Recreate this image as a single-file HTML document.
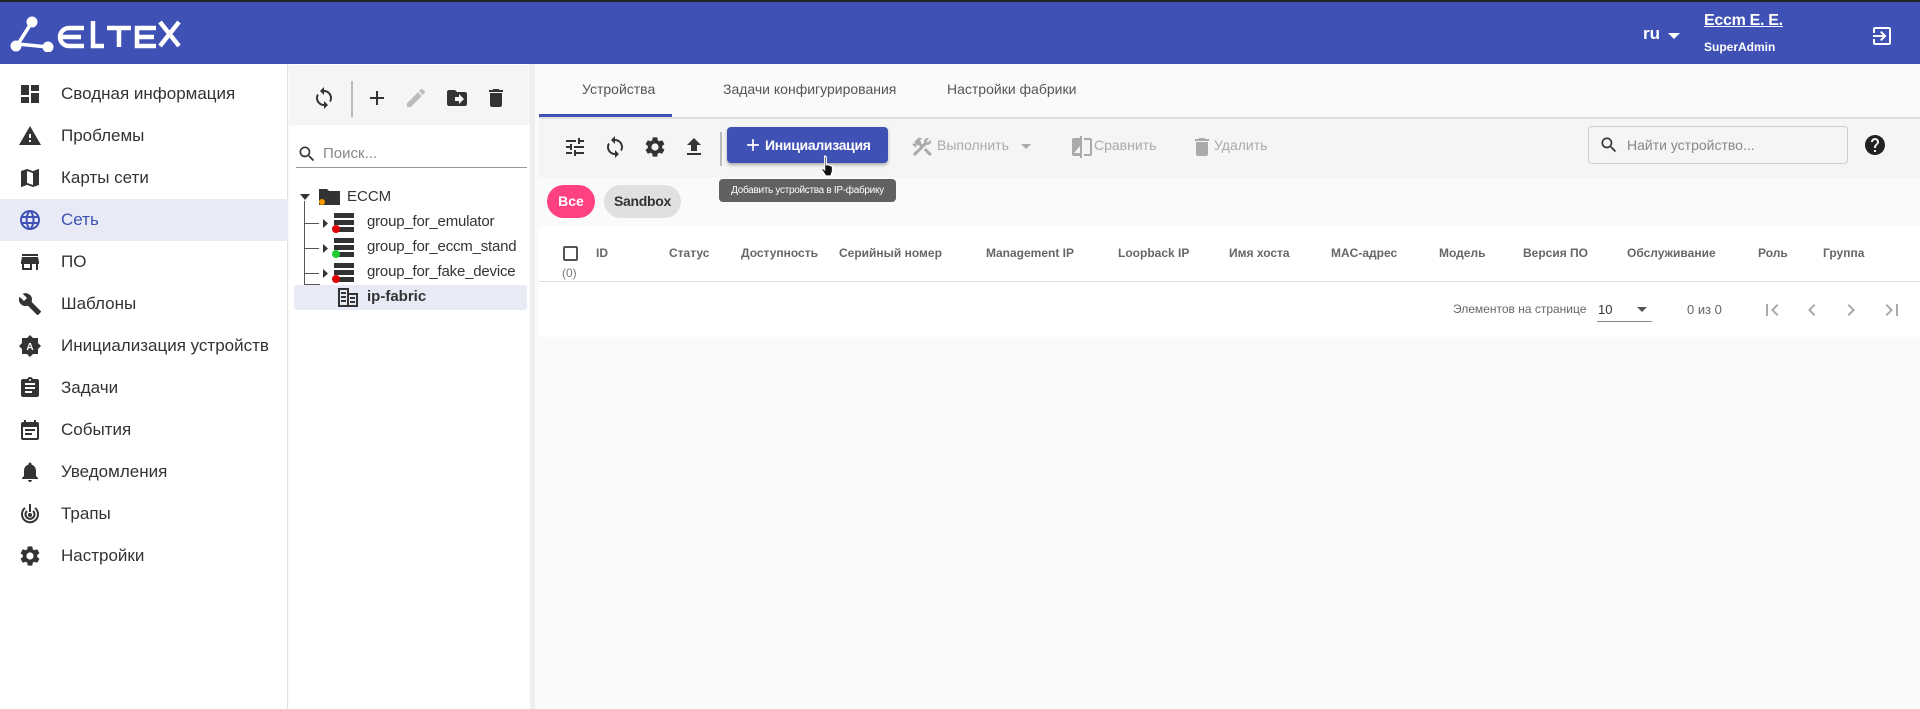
<!DOCTYPE html>
<html><head><meta charset="utf-8"><style>
*{box-sizing:border-box;margin:0;padding:0}
body{width:1920px;height:709px;overflow:hidden;background:#fafafa;font-family:"Liberation Sans",sans-serif;position:relative;color:#333}
.a{position:absolute;white-space:nowrap}
svg{display:block}
.hdr{left:0;top:0;width:1920px;height:64px;background:#3f51b5;border-top:2px solid #222}
.side{left:0;top:64px;width:288px;height:645px;background:#fff;border-right:1px solid #e0e0e0}
.si{position:absolute;left:0;width:288px;height:42px;display:flex;align-items:center}
.si svg{position:absolute;left:18px;top:9px}
.si span{position:absolute;left:61px;font-size:17px;color:#333}
.tree{left:289px;top:64px;width:246px;height:645px;background:#fff;border-right:5px solid #eee}
.th{position:absolute;font-size:12px;font-weight:bold;color:#666;top:246px;white-space:nowrap}
.gray{fill:#aaa}
</style></head><body>
<div class="a hdr">
 <svg class="a" style="left:10px;top:14px" width="172" height="36" viewBox="0 0 172 36">
  <g fill="#fff" stroke="#fff"><circle cx="22" cy="6" r="5"/><circle cx="6" cy="30" r="5"/><circle cx="38" cy="31" r="5"/>
  <path d="M22 6L8 28L38 31" stroke-width="3.5" fill="none"/></g>
  <g fill="none" stroke="#fff" stroke-width="4.5">
   <path d="M74 12H59a9 9 0 0 0 0 18h15M51 21h20"/>
   <path d="M83 5v25h11"/><path d="M97 12h24M109 12v19"/>
   <path d="M146 12h-19v18h19M127 21h17"/><path d="M150 6l19 24M169 6l-19 24"/>
  </g>
 </svg>
 <div class="a" style="left:1643px;top:22px;color:#fff;font-size:17px;font-weight:bold">ru</div>
 <svg class="a" style="left:1668px;top:31px" width="12" height="6"><path d="M0 0h12L6 6z" fill="#fff"/></svg>
 <div class="a" style="left:1704px;top:10px;color:#fff;font-size:16px;font-weight:bold;text-decoration:underline;letter-spacing:-0.3px">Eccm E. E.</div>
 <div class="a" style="left:1704px;top:38px;color:#fff;font-size:12px;font-weight:bold">SuperAdmin</div>
 <svg class="a" style="left:1870px;top:22px" width="24" height="24" viewBox="0 0 24 24"><path fill="#fff" d="M10.09 15.59L11.5 17l5-5-5-5-1.41 1.41L12.67 11H3v2h9.67l-2.58 2.59zM19 3H5c-1.11 0-2 .9-2 2v4h2V5h14v14H5v-4H3v4c0 1.1.89 2 2 2h14c1.1 0 2-.9 2-2V5c0-1.1-.9-2-2-2z"/></svg>
</div>

<div class="a side">
 <div class="si" style="top:9px"><svg width="24" height="24" viewBox="0 0 24 24"><path fill="#333" d="M3 13h8V3H3v10zm0 8h8v-6H3v6zm10 0h8V11h-8v10zm0-18v6h8V3h-8z"/></svg><span>Сводная информация</span></div>
 <div class="si" style="top:51px"><svg width="24" height="24" viewBox="0 0 24 24"><path fill="#333" d="M1 21h22L12 2 1 21zm12-3h-2v-2h2v2zm0-4h-2v-4h2v4z"/></svg><span>Проблемы</span></div>
 <div class="si" style="top:93px"><svg width="24" height="24" viewBox="0 0 24 24"><path fill="#333" d="M20.5 3l-.16.03L15 5.1 9 3 3.36 4.9c-.21.07-.36.25-.36.48V20.5c0 .28.22.5.5.5l.16-.03L9 18.9l6 2.1 5.64-1.9c.21-.07.36-.25.36-.48V3.5c0-.28-.22-.5-.5-.5zM15 19l-6-2.11V5l6 2.11V19z"/></svg><span>Карты сети</span></div>
 <div class="si" style="top:135px;background:#e8eaf6"><svg width="24" height="24" viewBox="0 0 24 24"><path fill="#3f51b5" d="M12 2a10 10 0 1 0 0 20 10 10 0 0 0 0-20zm6.9 6h-2.9a15 15 0 0 0-1.4-3.6A8 8 0 0 1 18.9 8zM12 4c.8 1.2 1.5 2.5 1.9 4h-3.8c.4-1.4 1.1-2.8 1.9-4zM4.3 14a8 8 0 0 1 0-4h3.4a16 16 0 0 0 0 4H4.3zm.8 2h3a15 15 0 0 0 1.4 3.6A8 8 0 0 1 5.1 16zM8 8H5.1a8 8 0 0 1 4.3-3.6C8.8 5.5 8.4 6.7 8 8zm4 12c-.8-1.2-1.5-2.5-1.900-4h3.8c-.4 1.4-1.1 2.8-1.9 4zm2.3-6H9.7a14 14 0 0 1 0-4h4.6a14 14 0 0 1 0 4zm.3 5.6c.6-1.1 1.1-2.3 1.4-3.6h2.9a8 8 0 0 1-4.3 3.6zm1.8-5.6a16 16 0 0 0 0-4h3.4a8 8 0 0 1 0 4h-3.4z"/></svg><span style="color:#3f51b5">Сеть</span></div>
 <div class="si" style="top:177px"><svg width="24" height="24" viewBox="0 0 24 24"><path fill="#333" d="M20 4H4v2h16V4zm1 10v-2l-1-5H4l-1 5v2h1v6h10v-6h4v6h2v-6h1zm-9 4H6v-4h6v4z"/></svg><span>ПО</span></div>
 <div class="si" style="top:219px"><svg width="24" height="24" viewBox="0 0 24 24"><path fill="#333" d="M22.7 19l-9.1-9.1c.9-2.3.4-5-1.5-6.9-2-2-5-2.4-7.4-1.3L9 6 6 9 1.6 4.7C.4 7.1.9 10.1 2.9 12.1c1.9 1.9 4.6 2.4 6.9 1.5l9.1 9.1c.4.4 1 .4 1.4 0l2.3-2.3c.5-.4.5-1.1.1-1.4z"/></svg><span>Шаблоны</span></div>
 <div class="si" style="top:261px"><svg width="24" height="24" viewBox="0 0 24 24"><path fill="#333" d="M12 1l3 3h5v5l3 3-3 3v5h-5l-3 3-3-3H4v-5l-3-3 3-3V4h5z"/><text x="12" y="16" font-size="10" font-weight="bold" fill="#fff" text-anchor="middle" font-family="Liberation Sans">A</text></svg><span>Инициализация устройств</span></div>
 <div class="si" style="top:303px"><svg width="24" height="24" viewBox="0 0 24 24"><path fill="#333" d="M19 3h-4.2C14.4 1.8 13.3 1 12 1s-2.4.8-2.8 2H5c-1.1 0-2 .9-2 2v14c0 1.1.9 2 2 2h14c1.1 0 2-.9 2-2V5c0-1.1-.9-2-2-2zm-7 0c.55 0 1 .45 1 1s-.45 1-1 1-1-.45-1-1 .45-1 1-1zm2 14H7v-2h7v2zm3-4H7v-2h10v2zm0-4H7V7h10v2z"/></svg><span>Задачи</span></div>
 <div class="si" style="top:345px"><svg width="24" height="24" viewBox="0 0 24 24"><path fill="#333" d="M19 4h-1V2h-2v2H8V2H6v2H5a2 2 0 0 0-2 2v14a2 2 0 0 0 2 2h14a2 2 0 0 0 2-2V6a2 2 0 0 0-2-2zm0 16H5V9h14v11zM7 11h10v2H7zm0 4h7v2H7z"/></svg><span>События</span></div>
 <div class="si" style="top:387px"><svg width="24" height="24" viewBox="0 0 24 24"><path fill="#333" d="M12 22c1.1 0 2-.9 2-2h-4c0 1.1.9 2 2 2zm6-6v-5c0-3.070-1.640-5.64-4.5-6.32V4c0-.83-.67-1.5-1.5-1.5s-1.5.67-1.5 1.5v.68C7.63 5.36 6 7.92 6 11v5l-2 2v1h16v-1l-2-2z"/></svg><span>Уведомления</span></div>
 <div class="si" style="top:429px"><svg width="24" height="24" viewBox="0 0 24 24"><g fill="none" stroke="#333" stroke-width="2"><path d="M7 6a8 8 0 1 0 10 0"/><path d="M9 9a4.5 4.5 0 1 0 6 0"/></g><circle cx="12" cy="13" r="2" fill="#333"/><rect x="11" y="2" width="2" height="8" fill="#333"/></svg><span>Трапы</span></div>
 <div class="si" style="top:471px"><svg width="24" height="24" viewBox="0 0 24 24"><path fill="#333" d="M19.14 12.94c.04-.3.06-.61.06-.94 0-.32-.02-.64-.07-.94l2.03-1.58a.49.49 0 0 0 .12-.61l-1.92-3.32a.49.49 0 0 0-.59-.22l-2.39.96c-.5-.38-1.03-.7-1.62-.94l-.36-2.54a.48.48 0 0 0-.48-.41h-3.84c-.24 0-.43.17-.47.41l-.36 2.54c-.59.24-1.13.57-1.62.94l-2.39-.96a.49.49 0 0 0-.59.22L2.74 8.87c-.12.21-.08.47.12.61l2.03 1.58c-.05.3-.09.63-.09.94s.02.64.07.94l-2.03 1.58a.49.49 0 0 0-.12.61l1.92 3.32c.12.22.37.29.59.22l2.39-.96c.5.38 1.03.7 1.62.94l.36 2.54c.05.24.24.41.48.41h3.84c.24 0 .44-.17.47-.41l.36-2.54c.59-.24 1.13-.56 1.62-.94l2.39.96c.22.08.47 0 .59-.22l1.92-3.32c.12-.22.07-.47-.12-.61l-2.01-1.58zM12 15.6A3.6 3.6 0 1 1 12 8.4a3.6 3.6 0 0 1 0 7.2z"/></svg><span>Настройки</span></div>
</div>

<div class="a tree">
 <div class="a" style="left:0;top:1px;width:241px;height:60px;background:#f5f5f5"></div>
 <svg class="a" style="left:23px;top:22px" width="24" height="24" viewBox="0 0 24 24"><path fill="#333" d="M12 4V1L8 5l4 4V6c3.31 0 6 2.69 6 6 0 1.01-.25 1.97-.7 2.8l1.46 1.46A7.930 7.930 0 0 0 20 12c0-4.42-3.58-8-8-8zm0 14c-3.31 0-6-2.69-6-6 0-1.01.25-1.97.7-2.8L5.24 7.74A7.93 7.93 0 0 0 4 12c0 4.42 3.58 8 8 8v3l4-4-4-4v3z"/></svg>
 <div class="a" style="left:62px;top:17px;width:2px;height:36px;background:#bbb"></div>
 <svg class="a" style="left:76px;top:22px" width="24" height="24" viewBox="0 0 24 24"><path fill="#333" d="M19 13h-6v6h-2v-6H5v-2h6V5h2v6h6v2z"/></svg>
 <svg class="a" style="left:115px;top:22px" width="24" height="24" viewBox="0 0 24 24"><path fill="#bbb" d="M3 17.25V21h3.75L17.81 9.94l-3.75-3.75L3 17.25zM20.71 7.04a1 1 0 0 0 0-1.41l-2.34-2.34a1 1 0 0 0-1.41 0l-1.83 1.83 3.75 3.75 1.83-1.83z"/></svg>
 <svg class="a" style="left:156px;top:22px" width="24" height="24" viewBox="0 0 24 24"><path fill="#333" d="M20 6h-8l-2-2H4c-1.1 0-2 .9-2 2v12c0 1.1.9 2 2 2h16c1.1 0 2-.9 2-2V8c0-1.1-.9-2-2-2zm-6 12v-3h-4v-4h4V8l5 5-5 5z"/></svg>
 <svg class="a" style="left:195px;top:22px" width="24" height="24" viewBox="0 0 24 24"><path fill="#333" d="M6 19c0 1.1.9 2 2 2h8c1.1 0 2-.9 2-2V7H6v12zM19 4h-3.5l-1-1h-5l-1 1H5v2h14V4z"/></svg>
 <svg class="a" style="left:8px;top:80px" width="20" height="20" viewBox="0 0 24 24"><path fill="#333" d="M15.5 14h-.79l-.28-.27A6.47 6.47 0 0 0 16 9.5 6.5 6.5 0 1 0 9.5 16c1.61 0 3.09-.59 4.23-1.57l.27.28v.79l5 4.99L20.49 19l-4.99-5zm-6 0C7.01 14 5 11.99 5 9.5S7.01 5 9.5 5 14 7.01 14 9.5 11.99 14 9.5 14z"/></svg>
 <div class="a" style="left:34px;top:81px;font-size:15px;color:#888">Поиск...</div>
 <div class="a" style="left:7px;top:103px;width:231px;height:1px;background:#999"></div>
 <svg class="a" style="left:11px;top:130px" width="10" height="6"><path d="M0 0h10L5 6z" fill="#333"/></svg>
 <div class="a" style="left:15px;top:137px;width:1px;height:83px;background:#555"></div>
 <div class="a" style="left:15px;top:220px;width:16px;height:1px;background:#555"></div>
 <svg class="a" style="left:30px;top:123px" width="22" height="18" viewBox="0 0 22 18"><path fill="#333" d="M0 2h8l2 2h11v14H0z"/><circle cx="3" cy="15" r="3" fill="#ff9800"/></svg>
 <div class="a" style="left:58px;top:124px;font-size:15px;color:#333">ECCM</div>

 <div class="a" style="left:16px;top:159px;width:14px;height:1px;background:#555"></div>
 <svg class="a" style="left:34px;top:155px" width="5" height="9"><path d="M0 0v9l5-4.5z" fill="#333"/></svg>
 <svg class="a" style="left:43px;top:149px" width="22" height="20" viewBox="0 0 22 20"><path fill="#333" d="M2 0h20v5H2zM2 7h20v5H2zM2 14h20v5H2z"/><circle cx="4" cy="16" r="4" fill="#e00000"/></svg>
 <div class="a" style="left:78px;top:149px;font-size:15px;color:#333;letter-spacing:-0.2px">group_for_emulator</div>

 <div class="a" style="left:16px;top:184px;width:14px;height:1px;background:#555"></div>
 <svg class="a" style="left:34px;top:180px" width="5" height="9"><path d="M0 0v9l5-4.5z" fill="#333"/></svg>
 <svg class="a" style="left:43px;top:174px" width="22" height="20" viewBox="0 0 22 20"><path fill="#333" d="M2 0h20v5H2zM2 7h20v5H2zM2 14h20v5H2z"/><circle cx="4" cy="16" r="4" fill="#22cc33"/></svg>
 <div class="a" style="left:78px;top:174px;font-size:15px;color:#333;letter-spacing:-0.2px">group_for_eccm_stand</div>

 <div class="a" style="left:16px;top:209px;width:14px;height:1px;background:#555"></div>
 <svg class="a" style="left:34px;top:205px" width="5" height="9"><path d="M0 0v9l5-4.5z" fill="#333"/></svg>
 <svg class="a" style="left:43px;top:199px" width="22" height="20" viewBox="0 0 22 20"><path fill="#333" d="M2 0h20v5H2zM2 7h20v5H2zM2 14h20v5H2z"/><circle cx="4" cy="16" r="4" fill="#e00000"/></svg>
 <div class="a" style="left:78px;top:199px;font-size:15px;color:#333;letter-spacing:-0.2px">group_for_fake_device</div>

 <div class="a" style="left:5px;top:221px;width:233px;height:25px;background:#e8eaf6;border-radius:3px"></div>
 <div class="a" style="left:15px;top:220px;width:16px;height:1px;background:#555"></div>
 <svg class="a" style="left:49px;top:224px" width="20" height="19" viewBox="0 0 20 19"><path fill="none" stroke="#333" stroke-width="2" d="M1 1h9v17H1zM10 6h9v12h-9M3 5h5M3 9h5M3 13h5M12 10h5M12 14h5"/></svg>
 <div class="a" style="left:78px;top:224px;font-size:15px;color:#333;font-weight:bold">ip-fabric</div>
</div>

<!-- main -->
<div class="a" style="left:539px;top:64px;width:1381px;height:55px;background:#fafafa;border-bottom:2px solid #e0e0e0"></div>
<div class="a" style="left:539px;top:114px;width:133px;height:3px;background:#3f51b5"></div>
<div class="a" style="left:582px;top:81px;font-size:14px;color:#555">Устройства</div>
<div class="a" style="left:723px;top:81px;font-size:14px;color:#555">Задачи конфигурирования</div>
<div class="a" style="left:947px;top:81px;font-size:14px;color:#555">Настройки фабрики</div>

<div class="a" style="left:539px;top:119px;width:1381px;height:59px;background:#f5f5f5"></div>
<svg class="a" style="left:563px;top:135px" width="24" height="24" viewBox="0 0 24 24"><path fill="#333" d="M3 17v2h6v-2H3zM3 5v2h10V5H3zm10 16v-2h8v-2h-8v-2h-2v6h2zM7 9v2H3v2h4v2h2V9H7zm14 4v-2H11v2h10zm-6-4h2V7h4V5h-4V3h-2v6z"/></svg>
<svg class="a" style="left:603px;top:135px" width="24" height="24" viewBox="0 0 24 24"><path fill="#333" d="M12 4V1L8 5l4 4V6c3.31 0 6 2.69 6 6 0 1.01-.25 1.97-.7 2.8l1.46 1.46A7.93 7.93 0 0 0 20 12c0-4.42-3.58-8-8-8zm0 14c-3.31 0-6-2.69-6-6 0-1.01.25-1.97.7-2.8L5.24 7.74A7.93 7.93 0 0 0 4 12c0 4.42 3.58 8 8 8v3l4-4-4-4v3z"/></svg>
<svg class="a" style="left:643px;top:135px" width="24" height="24" viewBox="0 0 24 24"><path fill="#333" d="M19.14 12.94c.04-.3.06-.61.06-.94 0-.32-.02-.64-.07-.94l2.03-1.58a.49.49 0 0 0 .12-.61l-1.92-3.32a.49.49 0 0 0-.59-.22l-2.39.96c-.5-.38-1.03-.7-1.62-.94l-.36-2.54a.48.48 0 0 0-.48-.41h-3.84c-.24 0-.43.17-.47.41l-.36 2.54c-.59.24-1.13.57-1.62.94l-2.39-.96a.49.49 0 0 0-.59.22L2.74 8.87c-.12.21-.08.47.12.61l2.03 1.58c-.05.3-.09.63-.09.94s.02.64.07.94l-2.03 1.58a.49.49 0 0 0-.12.61l1.92 3.32c.12.22.37.29.59.22l2.39-.96c.5.38 1.03.7 1.62.94l.36 2.54c.05.24.24.41.48.41h3.84c.24 0 .44-.17.47-.41l.36-2.54c.59-.24 1.13-.56 1.62-.94l2.39.96c.22.08.47 0 .59-.22l1.92-3.32c.12-.22.07-.47-.12-.61l-2.01-1.58zM12 15.6A3.6 3.6 0 1 1 12 8.4a3.6 3.6 0 0 1 0 7.2z"/></svg>
<svg class="a" style="left:682px;top:135px" width="24" height="24" viewBox="0 0 24 24"><path fill="#333" d="M5 20h14v-2H5v2zm0-10h4v6h6v-6h4l-7-7-7 7z"/></svg>
<div class="a" style="left:720px;top:132px;width:2px;height:34px;background:#bbb"></div>
<div class="a" style="left:727px;top:127px;width:161px;height:36px;background:#3f51b5;border-radius:4px;box-shadow:0 2px 3px rgba(0,0,0,.3)"></div>
<svg class="a" style="left:743px;top:135px" width="20" height="20" viewBox="0 0 24 24"><path fill="#fff" d="M19 13h-6v6h-2v-6H5v-2h6V5h2v6h6v2z"/></svg>
<div class="a" style="left:765px;top:137px;font-size:14px;color:#fff;font-weight:bold;letter-spacing:-0.3px">Инициализация</div>
<svg class="a" style="left:820px;top:155px" width="16" height="22" viewBox="0 0 14 20"><path fill="#111" stroke="#fff" stroke-width="1" d="M4 1c1 0 1.5.5 1.5 1.5V9l1-.3 1 .3 1 .5 1 .2 1.5.8V15l-1.5 4H5L1 13l1-1 2 1.5V2.5C4 1.5 3.5 1 4 1z"/></svg>
<svg class="a" style="left:910px;top:135px" width="24" height="24" viewBox="0 0 24 24"><path class="gray" d="M13.78 15.17l2.12-2.12 6.01 6.01-2.12 2.12zM17.5 10c1.93 0 3.5-1.57 3.5-3.5 0-.58-.16-1.12-.41-1.6l-2.7 2.7-1.49-1.49 2.7-2.7c-.48-.25-1.02-.41-1.6-.41C15.57 3 14 4.57 14 6.5c0 .41.08.8.21 1.16l-1.85 1.85-1.78-1.78.71-.71-1.41-1.41L12 3.49a3 3 0 0 0-4.24 0L4.22 7.03l1.41 1.41H2.81l-.71.71 3.54 3.54.71-.71V9.15l1.41 1.41.71-.71 1.78 1.78-7.41 7.41 2.12 2.12L16.34 9.79c.36.13.75.21 1.16.21z"/></svg>
<div class="a" style="left:937px;top:137px;font-size:14px;color:#aaa">Выполнить</div>
<svg class="a" style="left:1021px;top:144px" width="10" height="5"><path d="M0 0h10L5 5z" fill="#aaa"/></svg>
<svg class="a" style="left:1071px;top:135px" width="22" height="24" viewBox="0 0 22 24"><path class="gray" d="M9 1h2v22H9v-2H3a2 2 0 0 1-2-2V5a2 2 0 0 1 2-2h6zM9 18V11l-6 7zM13 3h6a2 2 0 0 1 2 2v14a2 2 0 0 1-2 2h-6v-2h6V5h-6z"/></svg>
<div class="a" style="left:1094px;top:137px;font-size:14px;color:#aaa">Сравнить</div>
<svg class="a" style="left:1190px;top:135px" width="24" height="24" viewBox="0 0 24 24"><path class="gray" d="M6 19c0 1.1.9 2 2 2h8c1.1 0 2-.9 2-2V7H6v12zM19 4h-3.5l-1-1h-5l-1 1H5v2h14V4z"/></svg>
<div class="a" style="left:1214px;top:137px;font-size:14px;color:#aaa">Удалить</div>
<div class="a" style="left:1588px;top:126px;width:260px;height:38px;border:1px solid #ccc;border-radius:4px;background:#f5f5f5"></div>
<svg class="a" style="left:1599px;top:135px" width="20" height="20" viewBox="0 0 24 24"><path fill="#333" d="M15.5 14h-.79l-.28-.27A6.47 6.47 0 0 0 16 9.5 6.5 6.5 0 1 0 9.5 16c1.61 0 3.09-.59 4.23-1.57l.27.28v.79l5 4.99L20.49 19l-4.99-5zm-6 0C7.01 14 5 11.99 5 9.5S7.01 5 9.5 5 14 7.01 14 9.5 11.99 14 9.5 14z"/></svg>
<div class="a" style="left:1627px;top:137px;font-size:14px;color:#888">Найти устройство...</div>
<svg class="a" style="left:1863px;top:133px" width="24" height="24" viewBox="0 0 24 24"><path fill="#222" d="M12 2C6.48 2 2 6.48 2 12s4.48 10 10 10 10-4.48 10-10S17.52 2 12 2zm1 17h-2v-2h2v2zm2.07-7.75l-.9.92C13.45 12.9 13 13.5 13 15h-2v-.5c0-1.1.45-2.1 1.17-2.83l1.24-1.26c.37-.36.59-.86.59-1.41 0-1.1-.9-2-2-2s-2 .9-2 2H8c0-2.21 1.79-4 4-4s4 1.79 4 4c0 .88-.36 1.68-.93 2.25z"/></svg>

<div class="a" style="left:547px;top:185px;width:48px;height:33px;background:#ff4081;border-radius:17px;color:#fff;font-size:14px;font-weight:bold;text-align:center;line-height:33px">Все</div>
<div class="a" style="left:604px;top:185px;width:77px;height:33px;background:#e0e0e0;border-radius:17px;color:#333;font-size:14px;font-weight:bold;text-align:center;line-height:33px;letter-spacing:-0.3px">Sandbox</div>
<div class="a" style="left:719px;top:179px;width:177px;height:23px;background:#616161;border-radius:4px;color:#fff;font-size:10px;text-align:center;line-height:23px;letter-spacing:-0.3px;overflow:hidden">Добавить устройства в IP-фабрику</div>

<div class="a" style="left:539px;top:226px;width:1381px;height:111px;background:#fff"></div>
<div class="a" style="left:539px;top:281px;width:1381px;height:1px;background:#e0e0e0"></div>
<div class="a" style="left:563px;top:246px;width:15px;height:15px;border:2px solid #555;border-radius:2px"></div>
<div class="a" style="left:562px;top:266px;font-size:12px;color:#777">(0)</div>
<div class="th" style="left:596px">ID</div>
<div class="th" style="left:669px">Статус</div>
<div class="th" style="left:741px">Доступность</div>
<div class="th" style="left:839px">Серийный номер</div>
<div class="th" style="left:986px">Management IP</div>
<div class="th" style="left:1118px">Loopback IP</div>
<div class="th" style="left:1229px">Имя хоста</div>
<div class="th" style="left:1331px">MAC-адрес</div>
<div class="th" style="left:1439px">Модель</div>
<div class="th" style="left:1523px">Версия ПО</div>
<div class="th" style="left:1627px">Обслуживание</div>
<div class="th" style="left:1758px">Роль</div>
<div class="th" style="left:1823px">Группа</div>

<div class="a" style="left:1453px;top:302px;font-size:12px;color:#666">Элементов на странице</div>
<div class="a" style="left:1598px;top:302px;font-size:13px;color:#333">10</div>
<svg class="a" style="left:1637px;top:307px" width="10" height="5"><path d="M0 0h10L5 5z" fill="#555"/></svg>
<div class="a" style="left:1597px;top:321px;width:55px;height:1px;background:#888"></div>
<div class="a" style="left:1687px;top:302px;font-size:13px;color:#666">0 из 0</div>
<svg class="a" style="left:1760px;top:298px" width="24" height="24" viewBox="0 0 24 24"><path fill="#aaa" d="M18.41 16.59L13.82 12l4.59-4.59L17 6l-6 6 6 6zM6 6h2v12H6z"/></svg>
<svg class="a" style="left:1800px;top:298px" width="24" height="24" viewBox="0 0 24 24"><path fill="#aaa" d="M15.41 7.41L14 6l-6 6 6 6 1.41-1.41L10.83 12z"/></svg>
<svg class="a" style="left:1839px;top:298px" width="24" height="24" viewBox="0 0 24 24"><path fill="#aaa" d="M10 6L8.59 7.41 13.17 12l-4.58 4.59L10 18l6-6z"/></svg>
<svg class="a" style="left:1880px;top:298px" width="24" height="24" viewBox="0 0 24 24"><path fill="#aaa" d="M5.59 7.41L10.18 12l-4.59 4.59L7 18l6-6-6-6zM16 6h2v12h-2z"/></svg>
</body></html>
